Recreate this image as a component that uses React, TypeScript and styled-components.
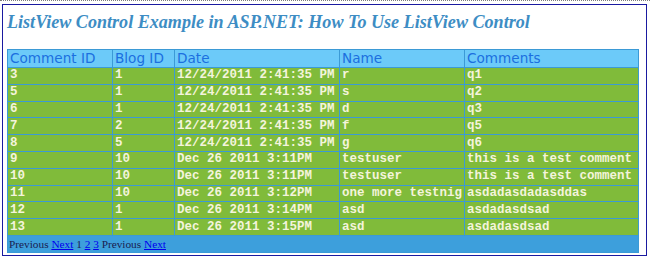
import React from "react";
import styled, { createGlobalStyle } from "styled-components";

type Comment = {
  id: number;
  blogId: number;
  date: string;
  name: string;
  text: string;
};

const comments: Comment[] = [
  { id: 3, blogId: 1, date: "12/24/2011 2:41:35 PM", name: "r", text: "q1" },
  { id: 5, blogId: 1, date: "12/24/2011 2:41:35 PM", name: "s", text: "q2" },
  { id: 6, blogId: 1, date: "12/24/2011 2:41:35 PM", name: "d", text: "q3" },
  { id: 7, blogId: 2, date: "12/24/2011 2:41:35 PM", name: "f", text: "q5" },
  { id: 8, blogId: 5, date: "12/24/2011 2:41:35 PM", name: "g", text: "q6" },
  { id: 9, blogId: 10, date: "Dec 26 2011 3:11PM", name: "testuser", text: "this is a test comment" },
  { id: 10, blogId: 10, date: "Dec 26 2011 3:11PM", name: "testuser", text: "this is a test comment" },
  { id: 11, blogId: 10, date: "Dec 26 2011 3:12PM", name: "one more testnig", text: "asdadasdadasddas" },
  { id: 12, blogId: 1, date: "Dec 26 2011 3:14PM", name: "asd", text: "asdadasdsad" },
  { id: 13, blogId: 1, date: "Dec 26 2011 3:15PM", name: "asd", text: "asdadasdsad" },
];

const columns = [
  { label: "Comment ID", width: 105 },
  { label: "Blog ID", width: 62 },
  { label: "Date", width: 165 },
  { label: "Name", width: 125 },
  { label: "Comments", width: 174 },
];

const GlobalStyle = createGlobalStyle`
  html, body {
    margin: 0;
    padding: 0;
    background: #ffffff;
  }
`;

export default function App() {
  return (
    <>
      <GlobalStyle />
      <Page>
        <Panel>
          <Title>ListView Control Example in ASP.NET: How To Use ListView Control</Title>
          <Grid>
            <colgroup>
              {columns.map((c) => (
                <col key={c.label} style={{ width: c.width }} />
              ))}
            </colgroup>
            <thead>
              <tr>
                {columns.map((c) => (
                  <HeadCell key={c.label}>{c.label}</HeadCell>
                ))}
              </tr>
            </thead>
            <tbody>
              {comments.map((c) => (
                <tr key={c.id}>
                  <Cell>{c.id}</Cell>
                  <Cell>{c.blogId}</Cell>
                  <Cell>{c.date}</Cell>
                  <Cell>{c.name}</Cell>
                  <Cell>{c.text}</Cell>
                </tr>
              ))}
            </tbody>
            <tfoot>
              <tr>
                <Pager colSpan={5}>
                  Previous <PagerLink href="#">Next</PagerLink> 1{" "}
                  <PagerLink href="#">2</PagerLink> <PagerLink href="#">3</PagerLink>{" "}
                  Previous <PagerLink href="#">Next</PagerLink>
                </Pager>
              </tr>
            </tfoot>
          </Grid>
        </Panel>
      </Page>
    </>
  );
}

/* Styled components */
const Page = styled.div`
  width: 650px;
  height: 260px;
  box-sizing: border-box;
  border-top: 1px dotted #7a7a7a;
  padding: 3px 3px 0 2px;
`;

const Panel = styled.div`
  width: 645px;
  height: 252px;
  box-sizing: border-box;
  border: 1px solid #1a1aa0;
  padding: 4px 7px 0 4px;
`;

const Title = styled.h1`
  margin: 0 0 14px 0;
  font-family: "Liberation Serif", "Times New Roman", serif;
  font-size: 18.1px;
  font-style: italic;
  font-weight: bold;
  line-height: 26px;
  color: #3d8dc4;
  white-space: nowrap;
`;

const Grid = styled.table`
  width: 631px;
  table-layout: fixed;
  border-collapse: collapse;
  border: 1px solid #3b9ad6;
`;

const HeadCell = styled.th`
  background: #6ccaf9;
  border: 1px solid #3b9ad6;
  padding: 0 2px;
  height: 17px;
  text-align: left;
  font-family: "DejaVu Sans", Verdana, sans-serif;
  font-size: 13.6px;
  font-weight: normal;
  line-height: 17px;
  color: #1b6fe0;
  white-space: nowrap;
  overflow: hidden;
`;

const Cell = styled.td`
  background: #80bb3a;
  border: 1px solid #3b9ad6;
  padding: 0 2px;
  height: 15.8px;
  font-family: "Liberation Mono", "Courier New", monospace;
  font-size: 12.5px;
  font-weight: bold;
  line-height: 15px;
  color: #f4f4dc;
  white-space: nowrap;
  overflow: hidden;
`;

const Pager = styled.td`
  background: #3d9fdc;
  padding: 2px 1px 1px;
  height: 13px;
  font-family: "Liberation Serif", "Times New Roman", serif;
  font-size: 11.3px;
  line-height: 13px;
  color: #1a2050;
`;

const PagerLink = styled.a`
  color: #0000ee;
  text-decoration: underline;
`;
